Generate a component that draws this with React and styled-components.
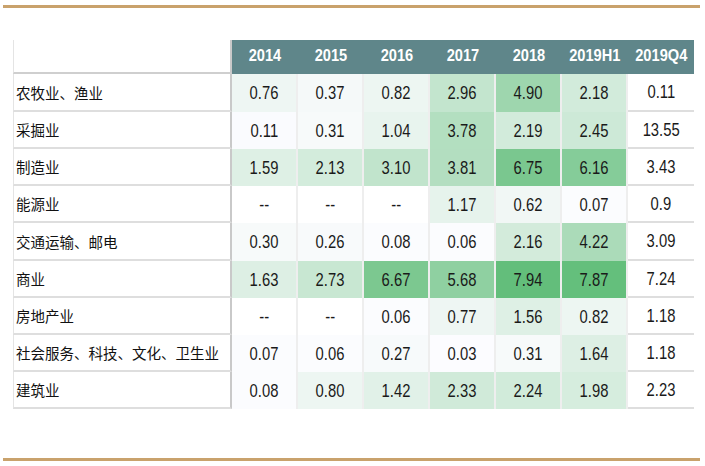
import React from "react";
import styled, { createGlobalStyle } from "styled-components";

const GlobalStyle = createGlobalStyle`
  html, body {
    margin: 0;
    padding: 0;
    background: #ffffff;
  }
`;

const Page = styled.div`
  width: 705px;
  height: 466px;
  box-sizing: border-box;
  padding-top: 5px;
  display: flex;
  flex-direction: column;
`;

const GoldRule = styled.div`
  margin: 0 5px 0 3px;
  height: 3px;
  background: #c9a26c;
`;

const TableWrap = styled.div`
  flex: 1;
  padding: 32px 0 0 13px;
`;

const Grid = styled.div`
  display: grid;
  grid-template-columns: 219px repeat(7, 66px);
  grid-template-rows: 34px 38px 37px 37px 37px 38px 37px 37px 37px 37px;
`;

const HeadBlank = styled.div`
  border-left: 1px solid #e4e4e4;
  border-right: 2px solid #c9c9c9;
  border-bottom: 2px solid #cfcfcf;
`;

const HeadCell = styled.div`
  background: #5f868a;
  color: #ffffff;
  font-family: "Liberation Sans", Arial, sans-serif;
  font-weight: bold;
  font-size: 17px;
  display: flex;
  align-items: center;
  justify-content: center;
  padding-bottom: 3px;
  box-sizing: border-box;
`;

const Narrow = styled.span`
  display: inline-block;
  white-space: nowrap;
  transform: scaleX(${(p) => p.$sx || 0.8});
`;

const Label = styled.div`
  border-left: 1px solid #e4e4e4;
  border-right: 2px solid #c9c9c9;
  border-bottom: 2px solid #dedede;
  font-family: "Noto Sans CJK SC", "Noto Sans", sans-serif;
  font-size: 14.5px;
  color: #111111;
  display: flex;
  align-items: center;
  padding-left: 2px;
  box-sizing: border-box;
  white-space: nowrap;
`;

const Cell = styled.div`
  background: ${(p) => p.$bg || "#ffffff"};
  border-right: ${(p) => (p.$plain ? "none" : "2px solid #eeeeee")};
  border-bottom: ${(p) => (p.$plain ? "2px solid #dedede" : "none")};
  font-family: "Liberation Sans", Arial, sans-serif;
  font-size: 18.5px;
  color: #1a1a1a;
  display: flex;
  align-items: center;
  justify-content: center;
  box-sizing: border-box;
`;

const years = ["2014", "2015", "2016", "2017", "2018", "2019H1", "2019Q4"];

const rows = [
  ["农牧业、渔业", [0.76, 0.37, 0.82, 2.96, 4.9, 2.18], "0.11"],
  ["采掘业", [0.11, 0.31, 1.04, 3.78, 2.19, 2.45], "13.55"],
  ["制造业", [1.59, 2.13, 3.1, 3.81, 6.75, 6.16], "3.43"],
  ["能源业", [null, null, null, 1.17, 0.62, 0.07], "0.9"],
  ["交通运输、邮电", [0.3, 0.26, 0.08, 0.06, 2.16, 4.22], "3.09"],
  ["商业", [1.63, 2.73, 6.67, 5.68, 7.94, 7.87], "7.24"],
  ["房地产业", [null, null, 0.06, 0.77, 1.56, 0.82], "1.18"],
  ["社会服务、科技、文化、卫生业", [0.07, 0.06, 0.27, 0.03, 0.31, 1.64], "1.18"],
  ["建筑业", [0.08, 0.8, 1.42, 2.33, 2.24, 1.98], "2.23"],
];

// excel style green-white scale
const MIN = 0.03;
const MAX = 7.94;
function scale(v) {
  if (v == null) return "#ffffff";
  const t = (v - MIN) / (MAX - MIN);
  const lo = [252, 252, 255];
  const hi = [99, 190, 123];
  const c = lo.map((l, i) => Math.round(l + (hi[i] - l) * t));
  return `rgb(${c[0]}, ${c[1]}, ${c[2]})`;
}

export default function App() {
  return (
    <>
      <GlobalStyle />
      <Page>
        <GoldRule />
        <TableWrap>
          <Grid>
            <HeadBlank />
            {years.map((y) => (
              <HeadCell key={y}>
                <Narrow $sx={0.86}>{y}</Narrow>
              </HeadCell>
            ))}
            {rows.map(([name, vals, q4]) => (
              <React.Fragment key={name}>
                <Label>{name}</Label>
                {vals.map((v, i) => (
                  <Cell key={i} $bg={scale(v)}>
                    <Narrow>{v == null ? "--" : v.toFixed(2)}</Narrow>
                  </Cell>
                ))}
                <Cell $plain>
                  <Narrow>{q4}</Narrow>
                </Cell>
              </React.Fragment>
            ))}
          </Grid>
        </TableWrap>
        <GoldRule />
        <div style={{ height: 5 }} />
      </Page>
    </>
  );
}
